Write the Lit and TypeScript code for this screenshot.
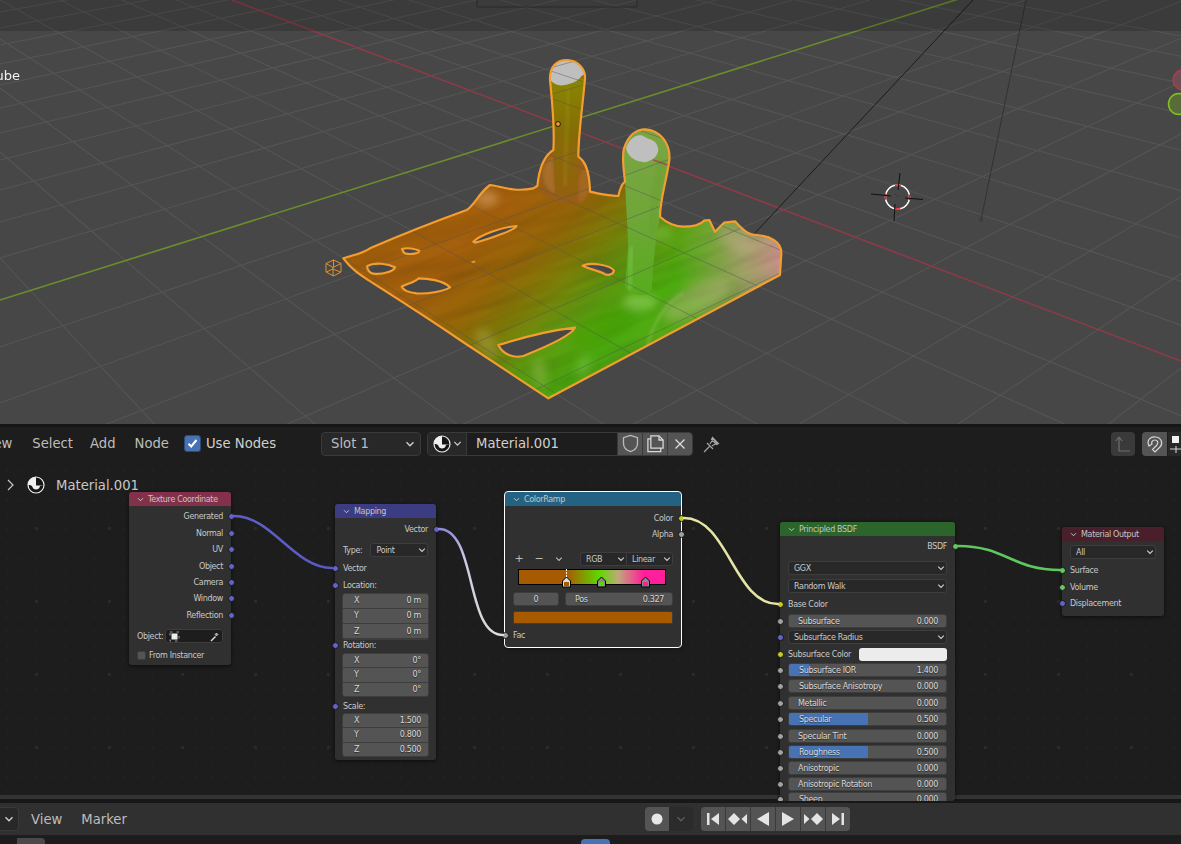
import { LitElement, html, svg, css } from "lit";
import { customElement } from "lit/decorators.js";

type Sock = "v" | "y" | "g" | "s";
interface Row {
  y: number;
  h?: number;
  k: "out" | "in" | "label" | "drop" | "num" | "vec" | "color" | "obj" | "check" | "ramptools" | "ramp" | "rampnums" | "rampcolor";
  t?: string;
  v?: string;
  s?: Sock;
  pct?: number;
  items?: [string, string][];
  ind?: boolean;
}
interface NodeDef {
  x: number; y: number; w: number; h: number;
  title: string; cls: string; sel?: boolean; rows: Row[];
}

const EDITOR_TOP = 424;

const chev = (c = "#d0d0d0", s = 8) => html`<svg class="chev" width=${s} height=${s} viewBox="0 0 8 8"><path d="M1.2 2.6 4 5.4l2.8-2.8" fill="none" stroke=${c} stroke-width="1.1"/></svg>`;

const nodes: NodeDef[] = [
  {
    x: 129, y: 492, w: 102, h: 173, title: "Texture Coordinate", cls: "h-tc",
    rows: [
      { y: 516, k: "out", t: "Generated", s: "v" },
      { y: 533, k: "out", t: "Normal", s: "v" },
      { y: 549, k: "out", t: "UV", s: "v" },
      { y: 566, k: "out", t: "Object", s: "v" },
      { y: 582, k: "out", t: "Camera", s: "v" },
      { y: 598, k: "out", t: "Window", s: "v" },
      { y: 615, k: "out", t: "Reflection", s: "v" },
      { y: 636, k: "obj", t: "Object:" },
      { y: 655, k: "check", t: "From Instancer" },
    ],
  },
  {
    x: 335, y: 504, w: 101, h: 256, title: "Mapping", cls: "h-map",
    rows: [
      { y: 529, k: "out", t: "Vector", s: "v" },
      { y: 550, k: "drop", t: "Point", v: "Type:" },
      { y: 568, k: "in", t: "Vector", s: "v" },
      { y: 585, k: "in", t: "Location:", s: "v" },
      { y: 616, h: 47, k: "vec", items: [["X", "0 m"], ["Y", "0 m"], ["Z", "0 m"]] },
      { y: 645, k: "in", t: "Rotation:", s: "v" },
      { y: 675, h: 44, k: "vec", items: [["X", "0°"], ["Y", "0°"], ["Z", "0°"]] },
      { y: 706, k: "in", t: "Scale:", s: "v" },
      { y: 735, h: 44, k: "vec", items: [["X", "1.500"], ["Y", "0.800"], ["Z", "0.500"]] },
    ],
  },
  {
    x: 505, y: 492, w: 176, h: 155, title: "ColorRamp", cls: "h-ramp", sel: true,
    rows: [
      { y: 518, k: "out", t: "Color", s: "y" },
      { y: 534, k: "out", t: "Alpha", s: "g" },
      { y: 559, k: "ramptools" },
      { y: 577, h: 16, k: "ramp" },
      { y: 599, h: 14, k: "rampnums" },
      { y: 617.5, h: 13, k: "rampcolor" },
      { y: 635, k: "in", t: "Fac", s: "g" },
    ],
  },
  {
    x: 780, y: 522, w: 175, h: 279, title: "Principled BSDF", cls: "h-bsdf",
    rows: [
      { y: 546, k: "out", t: "BSDF", s: "s" },
      { y: 568, k: "drop", t: "GGX" },
      { y: 586, k: "drop", t: "Random Walk" },
      { y: 604, k: "in", t: "Base Color", s: "y" },
      { y: 621, k: "num", t: "Subsurface", v: "0.000", s: "g" },
      { y: 637, k: "drop", t: "Subsurface Radius", s: "v" },
      { y: 654, k: "color", t: "Subsurface Color", s: "y" },
      { y: 670, k: "num", t: "Subsurface IOR", v: "1.400", s: "g", pct: 12.5, ind: true },
      { y: 686, k: "num", t: "Subsurface Anisotropy", v: "0.000", s: "g", ind: true },
      { y: 703, k: "num", t: "Metallic", v: "0.000", s: "g" },
      { y: 719, k: "num", t: "Specular", v: "0.500", s: "g", pct: 50, ind: true },
      { y: 736, k: "num", t: "Specular Tint", v: "0.000", s: "g" },
      { y: 752, k: "num", t: "Roughness", v: "0.500", s: "g", pct: 50, ind: true },
      { y: 768, k: "num", t: "Anisotropic", v: "0.000", s: "g" },
      { y: 784, k: "num", t: "Anisotropic Rotation", v: "0.000", s: "g" },
      { y: 799, k: "num", t: "Sheen", v: "0.000", s: "g", ind: true },
    ],
  },
  {
    x: 1062, y: 527, w: 102, h: 89, title: "Material Output", cls: "h-out",
    rows: [
      { y: 552, k: "drop", t: "All" },
      { y: 570, k: "in", t: "Surface", s: "s" },
      { y: 587, k: "in", t: "Volume", s: "s" },
      { y: 603, k: "in", t: "Displacement", s: "v" },
    ],
  },
];

const OUTLINE = "M70 595C100 585 130 580 150 565C230 530 330 490 440 450C465 435 475 400 510 375C540 378 580 398 640 385L652 378C658 320 675 285 700 270C705 200 695 110 690 60C688 20 710 0 740 0C775 0 797 30 795 55C790 120 775 220 775 290C790 300 808 320 810 395C840 402 870 408 895 408C900 385 905 372 915 365C910 320 905 290 912 265C925 225 950 208 975 208C1020 210 1052 250 1048 300C1040 360 1020 420 1020 470C1040 490 1070 500 1090 500C1120 500 1140 495 1152 482L1168 480L1185 515L1212 488L1245 484C1260 500 1280 525 1310 525C1350 528 1385 545 1384 580L1380 645L685 1015C640 985 540 920 420 840C340 785 270 740 160 670C130 650 100 635 70 595Z";
const HOLES = [
  "M246 567C260 562 285 566 298 572C298 580 275 585 255 580C250 577 248 572 246 567Z",
  "M142 618C165 605 205 612 225 622C222 632 190 645 160 641C150 640 140 628 142 618Z",
  "M245 680C260 670 285 668 295 655C320 655 370 660 390 682C370 695 320 702 290 700C270 698 250 692 245 680Z",
  "M460 545C480 525 550 500 590 498C590 508 500 540 465 548Z",
  "M788 617C810 605 870 615 882 632C880 645 860 648 850 640C830 630 800 625 788 617Z",
  "M535 855C600 835 700 810 765 803C755 825 680 860 610 888C580 895 550 885 535 855Z",
].join("");

@customElement("app-root")
export class AppRoot extends LitElement {
  static styles = css`
    :host { display: block; width: 1181px; height: 844px; overflow: hidden; background: #1d1d1d;
      font-family: "DejaVu Sans", sans-serif; color: #c8c8c8; }
    .page { display: flex; flex-direction: column; height: 844px; }
    .viewport { height: 424px; flex: none; background: #474747; }
    .viewport svg { display: block; }
    .editor { position: relative; height: 377px; flex: none; overflow: hidden; background-color: #1d1d1d;
      background-image:
        radial-gradient(circle at 1.5px 1.5px, #2a2a2a 1.5px, transparent 1.6px),
        radial-gradient(circle at 1px 1px, #222 .8px, transparent 1px);
      background-size: 73px 73px, 14.6px 14.6px;
      background-position: 35px 103px, 6px 2px; }
    .hdr { height: 38px; box-sizing: border-box; border-top: 3px solid #161616; padding-bottom: 2px; background: #1d1d1d;
      display: flex; align-items: center; font-size: 13.2px; color: #bdbdbd; white-space: nowrap; position: relative; }
    .menu { flex: none; }
    .cb { width: 17px; height: 17px; border-radius: 3px; background: #4772b3; border: 1px solid #2e4a75; box-sizing: border-box;
      display: flex; align-items: center; justify-content: center; flex: none; margin-left: 15px; }
    .use { margin-left: 5px; color: #d0d0d0; }
    .dd { width: 100px; margin-left: 45px; height: 24px; box-sizing: border-box; border: 1px solid #3a3a3a; border-radius: 4px; background: #282828;
      display: flex; align-items: center; justify-content: space-between; padding: 0 5px 0 9px; flex: none; }
    .matsel { display: flex; height: 24px; flex: none; margin-left: 6px; border-radius: 4px; overflow: hidden; border: 1px solid #3a3a3a; box-sizing: border-box; }
    .matico { width: 38px; background: #282828; display: flex; align-items: center; justify-content: center; gap: 2px; border-right: 1px solid #3a3a3a; }
    .matname { width: 150px; background: #1d1d1d; padding-left: 9px; display: flex; align-items: center; color: #d0d0d0; box-sizing: border-box; }
    .mbtn { width: 25px; background: #545454; display: flex; align-items: center; justify-content: center; border-left: 1px solid #3a3a3a; box-sizing: border-box; }
    .iconbtn { width: 24px; height: 24px; border-radius: 4px; display: flex; align-items: center; justify-content: center; flex: none; }
    .pin { margin-left: 7px; }
    .parent { margin-left: 387px; background: #3a3a3a; }
    .magnet { margin-left: 7px; background: #545454; width: 25px; border-radius: 4px 0 0 4px; }
    .snap { margin-left: 1px; background: #282828; border-radius: 0; }
    .m-view { margin-left: -19px; } .m-select { margin-left: 20px; } .m-add { margin-left: 17px; } .m-node { margin-left: 19px; }
    .crumb { position: absolute; left: 6px; top: 52px; display: flex; align-items: center; gap: 11px; font-size: 13.2px; color: #c8c8c8; height: 18px; z-index: 1; }
    .band { position: absolute; left: 0; right: 0; top: 371px; height: 6px; background: linear-gradient(#333 0 4px, #171717 4px); }
    .links { position: absolute; left: 0; top: 0; z-index: 2; pointer-events: none; }
    .node { position: absolute; background: #303030; border-radius: 3px; box-shadow: 0 1px 4px rgba(0,0,0,.6); font-size: 8px; letter-spacing: -.33px; color: #c9c9c9; z-index: 1; }
    .node.sel { outline: 1px solid #fff; outline-offset: 0; }
    .head { height: 14px; border-radius: 3px 3px 0 0; display: flex; align-items: center; padding-left: 8px; gap: 4px; color: #c4c4c4; }
    .h-tc { background: #83314a; } .h-map { background: #3c3c83; } .h-ramp { background: #246283; } .h-bsdf { background: #2b652b; } .h-out { background: #4a1f2c; }
    .row { position: relative; display: flex; align-items: center; box-sizing: border-box; padding: 0 8px; white-space: nowrap; }
    .r-out { justify-content: flex-end; }
    .r-vec { padding: 0 7px; }
    .sock { position: absolute; width: 7px; height: 7px; border-radius: 50%; box-sizing: border-box; border: 1px solid #151515; top: 50%; margin-top: -3.5px; z-index: 3; }
    .sock.l { left: -3.5px; } .sock.r { right: -3.5px; }
    .s-v { background: #6363c7; } .s-y { background: #c7c729; } .s-g { background: #a1a1a1; } .s-s { background: #63c763; }
    .f { flex: 1; min-width: 0; height: 14px; background: #545454; border: 1px solid #3d3d3d; border-radius: 3px; box-sizing: border-box; display: flex; align-items: center; justify-content: space-between; position: relative; padding: 0 8px 0 9px; color: #d8d8d8; overflow: hidden; text-shadow: 0 1px 1px rgba(0,0,0,.5); }
    .f.ind { padding-left: 10px; }
    .f .fill { position: absolute; left: 0; top: 0; bottom: 0; background: #4772b3; }
    .f span { position: relative; }
    .drop { flex: 1; min-width: 0; height: 14px; background: #282828; border: 1px solid #3d3d3d; border-radius: 3px; box-sizing: border-box; display: flex; align-items: center; justify-content: space-between; padding: 0 1px 0 5px; color: #c9c9c9; }
    .lbl { flex: none; margin-right: 8px; }
    .vec { flex: 1; display: flex; flex-direction: column; border-radius: 3px; overflow: hidden; border: 1px solid #3d3d3d; background: #3d3d3d; gap: 1px; box-sizing: border-box; height: 100%; }
    .vec div { flex: 1; background: #545454; display: flex; justify-content: space-between; align-items: center; padding: 0 7px 0 11px; color: #d8d8d8; text-shadow: 0 1px 1px rgba(0,0,0,.5); }
    .swatch { flex: 1; height: 13px; border-radius: 3px; background: #ececec; margin-left: 8px; }
    .picker { flex: 1; height: 14px; background: #1d1d1d; border: 1px solid #3d3d3d; border-radius: 3px; box-sizing: border-box; display: flex; align-items: center; justify-content: space-between; padding: 0 2px 0 3px; margin-left: 2px; }
    .box { width: 9px; height: 9px; border-radius: 2px; background: #545454; border: 1px solid #3d3d3d; box-sizing: border-box; margin-right: 3px; }
    .tools { display: flex; align-items: center; flex: 1; margin-left: -4px; }
    .tool { width: 20px; display: flex; justify-content: center; color: #bbb; font-size: 11px; line-height: 10px; }
    .tooldrops { display: flex; margin-left: auto; width: 93px; }
    .tooldrops .drop { border-radius: 0; }
    .tooldrops .drop:first-child { border-radius: 3px 0 0 3px; border-right: 0; }
    .tooldrops .drop:last-child { border-radius: 0 3px 3px 0; }
    .rampbar { position: relative; margin: 0 7px 0 5px; flex: 1; height: 16px; box-sizing: border-box; border: 1px solid #000;
      background: linear-gradient(90deg, #a85a00 0 32.7%, #5fd800 55%, #c0a87a 68%, #ff1f9a 85%, #ff1f9a 100%); }
    .handles { position: absolute; left: -1px; top: 0; overflow: visible; }
    .nums { display: flex; gap: 6px; flex: 1; }
    .nums .f:first-child { flex: none; width: 46px; justify-content: center; padding: 0; }
    .rc { flex: 1; height: 13px; background: #a85a00; border-radius: 2px; border: 1px solid #3d3d3d; box-sizing: border-box; }
    .sep { height: 2px; flex: none; background: #171717; }
    .tl { height: 32px; flex: none; background: #303030; display: flex; align-items: center; font-size: 13.2px; color: #bdbdbd; position: relative; }
    .tdd { width: 20px; height: 24px; margin-left: -1px; border: 1px solid #3a3a3a; border-left: 0; border-radius: 0 4px 4px 0; background: #282828; box-sizing: border-box; display: flex; align-items: center; justify-content: center; flex: none; }
    .t-view { margin-left: 12px; } .t-marker { margin-left: 19px; }
    .rec { display: flex; height: 24px; margin-left: 518px; border-radius: 4px; overflow: hidden; flex: none; }
    .rec div { width: 24px; display: flex; align-items: center; justify-content: center; }
    .rec .a { background: #545454; } .rec .b { background: #2b2b2b; }
    .play { display: flex; height: 24px; margin-left: 8px; border-radius: 4px; overflow: hidden; flex: none; gap: 1px; background: #3a3a3a; }
    .play div { width: 24px; background: #545454; display: flex; align-items: center; justify-content: center; }
    .bot { flex: 1; background: #1d1d1d; position: relative; display: flex; align-items: flex-end; }
    .tab { width: 28px; height: 6px; margin-left: 17px; background: #4a4a4a; border-radius: 0 4px 0 0; flex: none; }
    .mark { width: 29px; height: 5px; margin-left: 536px; background: #4772b3; border-radius: 4px 4px 0 0; flex: none; }
  `;

  private sock(r: Row, side: "l" | "r") {
    return r.s ? html`<i class="sock ${side} s-${r.s}"></i>` : "";
  }

  private rowBody(r: Row) {
    switch (r.k) {
      case "out": return html`${r.t}${this.sock(r, "r")}`;
      case "in": return html`${this.sock(r, "l")}${r.t}`;
      case "drop": return html`${this.sock(r, "l")}${r.v ? html`<span class="lbl">${r.v}</span>` : ""}<div class="drop"><span>${r.t}</span>${chev()}</div>`;
      case "num": return html`${this.sock(r, "l")}<div class="f ${r.ind ? "ind" : ""}">${r.pct ? html`<div class="fill" style="width:${r.pct}%"></div>` : ""}<span>${r.t}</span><span>${r.v}</span></div>`;
      case "vec": return html`<div class="vec">${r.items!.map(([a, b]) => html`<div><span>${a}</span><span>${b}</span></div>`)}</div>`;
      case "color": return html`${this.sock(r, "l")}${r.t}<div class="swatch"></div>`;
      case "obj": return html`${r.t}<div class="picker"><svg width="11" height="11" viewBox="0 0 11 11"><rect x="1" y="1" width="9" height="9" fill="none" stroke="#bbb" stroke-width=".8" stroke-dasharray="2.5 4"/><rect x="2.5" y="2.5" width="6" height="6" fill="#eee"/></svg><svg width="11" height="11" viewBox="0 0 11 11"><path d="M1.5 9.5 6 5l1 1-4.500 4.500z" fill="#ddd"/><path d="M6 3.500 7.500 2l1.500 1.500L7.500 5z" fill="#aaa" stroke="#ddd" stroke-width=".6"/></svg></div>`;
      case "check": return html`<div class="box"></div>${r.t}`;
      case "ramptools": return html`<div class="tools"><div class="tool">+</div><div class="tool">−</div><div class="tool">${chev("#bbb")}</div><div class="tooldrops"><div class="drop"><span>RGB</span>${chev()}</div><div class="drop"><span>Linear</span>${chev()}</div></div></div>`;
      case "ramp": return html`<div class="rampbar"><svg class="handles" width="148" height="18" viewBox="0 0 148 18">
          <path d="M48.500 -1V8" stroke="#fff" stroke-width="1" stroke-dasharray="2 1"/>
          ${([[48.5, "#a85a00", "#fff"], [83.5, "#5fd800", "#000"], [127.5, "#ff1f9a", "#000"]] as [number, string, string][]).map(([x, c, top]) => svg`
            <path d="M${x - 4} 17V11L${x} 7L${x + 4} 11V17Z" fill="${top === "#fff" ? "#ddd" : "#8a8a8a"}" stroke="#000" stroke-width="1"/>
            <rect x="${x - 2.5}" y="12" width="5" height="4" fill="${c}"/>`)}
        </svg></div>`;
      case "rampnums": return html`<div class="nums"><div class="f"><span>0</span></div><div class="f"><span>Pos</span><span>0.327</span></div></div>`;
      case "rampcolor": return html`<div class="rc"></div>`;
    }
  }

  private renderNode(n: NodeDef) {
    let bottom = n.y + 14;
    return html`<div class="node ${n.sel ? "sel" : ""}" style="left:${n.x}px;top:${n.y - EDITOR_TOP}px;width:${n.w}px;height:${n.h}px">
      <div class="head ${n.cls}">${chev("#ccc", 7)}<span>${n.title}</span></div>
      ${n.rows.map((r) => {
        const h = r.h ?? 14;
        const top = r.y - h / 2;
        const mt = top - bottom;
        bottom = top + h;
        return html`<div class="row r-${r.k}" style="height:${h}px;margin-top:${mt}px">${this.rowBody(r)}</div>`;
      })}
    </div>`;
  }

  private gridLines() {
    const a = [-135, -120, -105, -91, -77, -64, -52, -41, -30, -17, -3, 12, 28, 45, 64, 85, 108, 133, 160, 190, 222, 258, 347, 403, 466, 548, 645, 760, 900, 1070, 1280];
    const b = [-186, -180, -172, -163, -152, -140, -126, -113, -100, -73, -55, -30, 0, 39, 88, 152, 258, 440, 780];
    return svg`
      ${a.map((c) => svg`<line x1="0" y1="${c}" x2="1181" y2="${c - (1181 * (c + 380)) / 2150}"/>`)}
      ${b.map((c) => svg`<line x1="0" y1="${c}" x2="1181" y2="${c + (1181 * (c + 280)) / 500}"/>`)}
    `;
  }

  private scene() {
    const origin = [558, 124];
    return html`<svg width="1181" height="424" viewBox="0 0 1181 424">
      <defs>
        <linearGradient id="mg" gradientUnits="userSpaceOnUse" x1="500" y1="500" x2="947" y2="967">
          <stop offset="0" stop-color="#a4600c"/><stop offset=".22" stop-color="#966608"/>
          <stop offset=".4" stop-color="#7e7c08"/><stop offset=".58" stop-color="#609a10"/>
          <stop offset=".78" stop-color="#4cac0e"/><stop offset="1" stop-color="#58a81a"/>
        </linearGradient>
        <radialGradient id="pink" gradientUnits="userSpaceOnUse" cx="1390" cy="590" r="330">
          <stop offset="0" stop-color="#d98e96" stop-opacity=".95"/>
          <stop offset=".4" stop-color="#b0a078" stop-opacity=".8"/>
          <stop offset="1" stop-color="#a0a060" stop-opacity="0"/>
        </radialGradient>
        <linearGradient id="p1" x1="0" y1="0" x2="0" y2="1">
          <stop offset="0" stop-color="#8a8600"/><stop offset=".45" stop-color="#866c06"/><stop offset="1" stop-color="#94600e"/>
        </linearGradient>
        <linearGradient id="p2" x1="0" y1="0" x2="0" y2="1">
          <stop offset="0" stop-color="#7ca544"/><stop offset=".5" stop-color="#70a63a"/><stop offset="1" stop-color="#56ac1c"/>
        </linearGradient>
        <filter id="bl" x="-30%" y="-30%" width="160%" height="160%"><feGaussianBlur stdDeviation="12"/></filter>
        <filter id="bs" x="-30%" y="-30%" width="160%" height="160%"><feGaussianBlur stdDeviation="4"/></filter>
        <filter id="noise" x="0" y="0" width="100%" height="100%">
          <feTurbulence type="fractalNoise" baseFrequency=".004 .028" numOctaves="2" seed="4"/>
          <feColorMatrix values="0 0 0 0 0  0 0 0 0 0  0 0 0 0 0  1.4 0 0 0 -.5"/>
        </filter>
        <clipPath id="clip"><path clip-rule="evenodd" transform="translate(320 60) scale(.33333)" d="${OUTLINE}${HOLES}"/></clipPath>
      </defs>
      <rect width="1181" height="424" fill="#474747"/>
      <g stroke="#555" stroke-width="1.100" fill="none">${this.gridLines()}</g>
      <line x1="0" y1="300" x2="1000" y2="-14" stroke="#6a8f2a" stroke-width="1.600"/>
      <line x1="232" y1="0" x2="1181" y2="361" stroke="#8e3a48" stroke-width="1.500"/>
      <line x1="755" y1="233" x2="973" y2="0" stroke="#1c1c1c" stroke-width="1"/>
      <line x1="1026" y1="0" x2="981" y2="220" stroke="#333" stroke-width="1"/>
      <path d="M981 218l2 2-2 2-2-2z" fill="none" stroke="#333" stroke-width=".7"/>
      <rect width="1181" height="31" fill="#000" opacity=".16"/>
      <path d="M477 0V7H637V0" fill="none" stroke="#2a2a2a" stroke-width="1"/>

      <g clip-path="url(#clip)">
        <g transform="translate(320 60) scale(.33333)">
          <rect x="0" y="0" width="1440" height="1050" fill="url(#mg)"/>
          <rect x="0" y="0" width="1440" height="1050" fill="url(#pink)"/>
          <g transform="rotate(-20 700 600)"><rect x="-100" y="200" width="1700" height="1000" filter="url(#noise)" opacity=".16"/></g>
          <g filter="url(#bl)">
            <ellipse cx="500" cy="415" rx="35" ry="25" fill="#e0b080" opacity=".45"/>
            <ellipse cx="1130" cy="720" rx="110" ry="45" fill="#b8b880" opacity=".45" transform="rotate(-28 1130 720)"/>
            <ellipse cx="1250" cy="540" rx="60" ry="30" fill="#c8b090" opacity=".4" transform="rotate(25 1250 540)"/>
            <ellipse cx="960" cy="725" rx="50" ry="26" fill="#a4d870" opacity=".5"/>
            <ellipse cx="1020" cy="520" rx="40" ry="26" fill="#80c850" opacity=".4"/>
            <ellipse cx="850" cy="800" rx="110" ry="40" fill="#40a008" opacity=".5" transform="rotate(-28 850 800)"/>
            <ellipse cx="500" cy="850" rx="28" ry="50" fill="#a8a040" opacity=".5" transform="rotate(-30 500 850)"/>
            <ellipse cx="660" cy="940" rx="20" ry="45" fill="#a0c060" opacity=".4" transform="rotate(-10 660 940)"/>
            <ellipse cx="790" cy="920" rx="20" ry="36" fill="#90c860" opacity=".35" transform="rotate(20 790 920)"/>
          </g>
          <path d="M975 880C995 800 1030 730 1090 700" stroke="#c8d8a0" stroke-width="7" fill="none" opacity=".3" filter="url(#bs)"/>
          <path d="M652 378C658 320 675 285 700 270L775 290C790 300 808 320 810 395C800 425 760 440 735 430C700 425 660 410 652 378Z" fill="#985e16"/>
          <path d="M668 340C670 310 685 295 700 290L705 400C690 395 670 380 668 340Z" fill="#c08c50" opacity=".35" filter="url(#bs)"/>
          <path d="M775 400C775 330 790 320 805 330L808 395C795 420 785 430 775 425Z" fill="#b88040" opacity=".3" filter="url(#bs)"/>
          <path d="M690 60C695 110 705 200 700 270L705 395C720 410 760 420 772 402L775 290C775 220 790 120 795 55Z" fill="url(#p1)"/>
          <path d="M745 80C745 180 735 280 735 380" stroke="#a0a020" stroke-width="12" fill="none" opacity=".25" filter="url(#bs)"/>
          <path d="M680 -5L688 55C695 70 715 80 735 75C755 72 775 62 785 48L802 38V-5Z" fill="#bfbfbf"/>
          <path d="M912 265C905 290 910 320 915 365L925 560L915 680C930 710 985 715 995 690C1000 620 1002 560 1020 470C1020 420 1040 360 1048 300C1052 250 1020 210 975 208C950 208 925 225 912 265Z" fill="url(#p2)"/>
          <path d="M935 560C930 640 925 670 930 690" stroke="#90d860" stroke-width="16" fill="none" opacity=".3" filter="url(#bs)"/>
          <path d="M1030 300C1010 380 1000 430 998 520" stroke="#5e9a28" stroke-width="24" fill="none" opacity=".25" filter="url(#bs)"/>
          <path d="M918 265C925 240 945 222 965 226L985 236C1005 240 1015 255 1015 270C1012 290 1000 300 975 307C950 305 925 295 918 265Z" fill="#bfbfbf"/>
          <line x1="1000" y1="300" x2="1060" y2="321" stroke="#a84a50" stroke-width="4"/>
        </g>
        <g stroke="#555" stroke-width="1" fill="none" opacity=".45">${this.gridLines()}</g>
      </g>
      <path transform="translate(320 60) scale(.33333)" d="${OUTLINE}${HOLES}" fill="none" stroke="#f59e30" stroke-width="6.500" stroke-linejoin="round"/>
      <path d="M471 262l3-1.500 2 1.500-3 1z" fill="#f09a2c"/>
      <circle cx="${origin[0]}" cy="${origin[1]}" r="2.400" fill="#f5a030" stroke="#1a1a1a" stroke-width="1"/>
      <g fill="none" stroke="#f09a2c" stroke-width=".9">
        <path d="M333.500 260l7.500 3.500v8.500l-7.500 4-7.500-4v-8.500z"/>
        <path d="M326 263.500l7 4 8-4M333 267.500v8.500M326.500 272l6-3 8 3M333.500 260v7"/>
      </g>
      <g>
        <circle cx="897.500" cy="197" r="12" fill="none" stroke="#fff" stroke-width="1.500"/>
        <circle cx="897.500" cy="197" r="12" fill="none" stroke="#f01818" stroke-width="1.600" stroke-dasharray="6 12.850" stroke-dashoffset="3"/>
        <path d="M900 173l-2 17M895 204l-1 17M871 194l20 2M905 198l18 1.500" stroke="#111" stroke-width="1" fill="none"/>
        <path d="M895 194l4 3" stroke="#333" stroke-width=".8"/>
      </g>
      <circle cx="1183" cy="80" r="10" fill="#6e4e54" stroke="#b03a4c" stroke-width="1.300"/>
      <circle cx="1179" cy="104" r="10.500" fill="#5a6b3a" stroke="#7fc41e" stroke-width="1.500"/>
      <text x="20" y="80" text-anchor="end" font-family="DejaVu Sans, sans-serif" font-size="13" fill="#f0f0f0">Cube</text>
    </svg>`;
  }

  private sphere(size: number) {
    return html`<svg width=${size} height=${size} viewBox="0 0 18 18" style="flex:none">
      <circle cx="9" cy="9" r="8" fill="#161616" stroke="#eee" stroke-width="1.200"/>
      <path d="M9 1A8 8 0 0 0 1 9C3.500 9 5 9.500 5.500 11C6 14.500 12.500 14.500 13 10L17 9.500H9Z" fill="#f0f0f0"/>
    </svg>`;
  }

  render() {
    return html`<div class="page">
      <div class="viewport">${this.scene()}</div>
      <div class="editor">
        <div class="band"></div>
        <div class="hdr">
          <span class="menu m-view">View</span>
          <span class="menu m-select">Select</span>
          <span class="menu m-add">Add</span>
          <span class="menu m-node">Node</span>
          <div class="cb"><svg width="13" height="13" viewBox="0 0 13 13"><path d="M2.500 6.800 5.200 9.500 10.500 3" fill="none" stroke="#fff" stroke-width="2"/></svg></div>
          <span class="use">Use Nodes</span>
          <div class="dd"><span>Slot 1</span>${chev("#d0d0d0", 10)}</div>
          <div class="matsel">
            <div class="matico">${this.sphere(18)}${chev("#d0d0d0", 9)}</div>
            <div class="matname">Material.001</div>
            <div class="mbtn"><svg width="21" height="21" viewBox="0 0 18 18"><path d="M9 2 3 4v5c0 4 3 6 6 7 3-1 6-3 6-7V4z" fill="none" stroke="#bbb" stroke-width="1.100"/></svg></div>
            <div class="mbtn"><svg width="21" height="21" viewBox="0 0 18 18"><path d="M5 5H2.500v11h11v-3M5 2.500h7l3.500 3.500v7H5z" fill="none" stroke="#d8d8d8" stroke-width="1.100"/><path d="M12 2.500V6h3.500" fill="none" stroke="#d8d8d8" stroke-width="1.100"/></svg></div>
            <div class="mbtn"><svg width="14" height="14" viewBox="0 0 14 14"><path d="M2.500 2.500l9 9M11.500 2.500l-9 9" stroke="#e0e0e0" stroke-width="1.200"/></svg></div>
          </div>
          <div class="iconbtn pin"><svg width="20" height="20" viewBox="0 0 20 20"><path d="M2 18l5.500-5.500M5 9l6 6M8 10l3-5 4 4-5 3M10.500 3.500l6 6-2 1-5-5z" fill="none" stroke="#a8a8a8" stroke-width="1.100"/></svg></div>
          <div class="iconbtn parent"><svg width="18" height="18" viewBox="0 0 18 18"><path d="M5 2V16H16M5 2 1.800 6M5 2l3.200 4" fill="none" stroke="#6e6e6e" stroke-width="1.200"/></svg></div>
          <div class="iconbtn magnet"><svg width="20" height="20" viewBox="0 0 20 20"><path d="M4 12 C1 6 6 2 11 3 C17 4 18 10 15 13 L10 18 L7.500 15.500 L12 11 C14 8 12 6 10 6 C7 6 6 9 7 10 L4 12Z" fill="none" stroke="#d8d8d8" stroke-width="1.200"/></svg></div>
          <div class="iconbtn snap"><svg width="24" height="24" viewBox="0 0 24 24"><rect x="4" y="4" width="7" height="7" fill="#f0f0f0"/><path d="M13 8h8M8 14v7M2 17h16" stroke="#d0d0d0" stroke-width="1.100" fill="none"/></svg></div>
        </div>
        <div class="crumb">
          <svg width="10" height="14" viewBox="0 0 10 14" style="flex:none"><path d="M2 2l5 5-5 5" fill="none" stroke="#c8c8c8" stroke-width="1.200"/></svg>
          ${this.sphere(18)}<span>Material.001</span>
        </div>
        ${nodes.map((n) => this.renderNode(n))}
        <svg class="links" width="1181" height="377" viewBox="0 424 1181 377" fill="none" stroke-width="2.500" stroke-linecap="round">
          <defs>
            <linearGradient id="l2" x1="0" y1="0" x2="0" y2="1"><stop offset="0" stop-color="#8c8cd8"/><stop offset=".25" stop-color="#c8c8e4"/><stop offset="1" stop-color="#dcdcdc"/></linearGradient>
            <linearGradient id="l1" x1="0" y1="0" x2="1" y2="0"><stop offset="0" stop-color="#6060c8"/><stop offset="1" stop-color="#5858c0"/></linearGradient>
          </defs>
          <path d="M234 516C272 516 294 568 332 568" stroke="url(#l1)"/>
          <path d="M439 529C477 529 465 635 503 635" stroke="url(#l2)"/>
          <path d="M684 518C728 518 734 604 778 604" stroke="#e4e4a6"/>
          <path d="M958 546C1006 546 1012 570 1060 570" stroke="#5fc75f"/>
        </svg>
      </div>
      <div class="sep"></div>
      <div class="tl">
        <div class="tdd">${chev("#d0d0d0", 10)}</div>
        <span class="t-view">View</span>
        <span class="t-marker">Marker</span>
        <div class="rec">
          <div class="a"><svg width="14" height="14" viewBox="0 0 14 14"><circle cx="7" cy="7" r="5.500" fill="#e8e8e8"/></svg></div>
          <div class="b">${chev("#5c5c5c", 10)}</div>
        </div>
        <div class="play">
          <div><svg width="18" height="16" viewBox="0 0 18 16"><path d="M3 2h2.500v12H3zM15 2v12L7 8z" fill="#e4e4e4"/></svg></div>
          <div><svg width="22" height="16" viewBox="0 0 22 16"><path d="M7 2l6 6-6 6-6-6zM20 3v10l-5.500-5z" fill="#e4e4e4"/></svg></div>
          <div><svg width="16" height="16" viewBox="0 0 16 16"><path d="M14 1v14L2 8z" fill="#e4e4e4"/></svg></div>
          <div><svg width="16" height="16" viewBox="0 0 16 16"><path d="M2 1v14l12-7z" fill="#e4e4e4"/></svg></div>
          <div><svg width="22" height="16" viewBox="0 0 22 16"><path d="M15 2l6 6-6 6-6-6zM2 3v10l5.500-5z" fill="#e4e4e4"/></svg></div>
          <div><svg width="18" height="16" viewBox="0 0 18 16"><path d="M12.500 2H15v12h-2.500zM3 2v12l8-6z" fill="#e4e4e4"/></svg></div>
        </div>
      </div>
      <div class="bot"><div class="tab"></div><div class="mark"></div></div>
    </div>`;
  }
}
